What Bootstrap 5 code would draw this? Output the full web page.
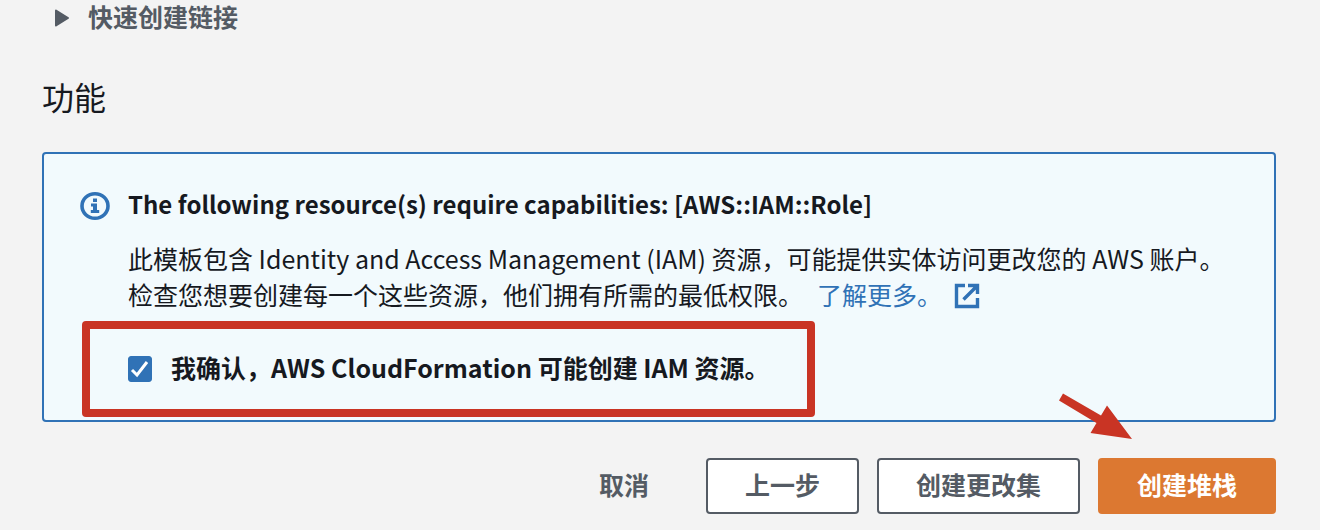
<!DOCTYPE html>
<html lang="zh-CN">
<head>
<meta charset="utf-8">
<meta name="viewport" content="width=device-width, initial-scale=1">
<title>创建堆栈</title>
<link href="https://cdn.jsdelivr.net/npm/bootstrap@5.3.0/dist/css/bootstrap.min.css" rel="stylesheet">
<style>
body { background: #f3f3f3; color: #16191f; font: 25px/36px "Noto Sans CJK SC", sans-serif; }
.page-body { padding: 0 44px 16px 42px; }
.quick-toggle { color: #545b64; font-weight: 700; font-size: 25px; line-height: 32px; gap: 18px; padding: 0 0 0 12px; border: 0; background: none; }
.quick-toggle svg { margin-top: 4px; }
.section-title { font-size: 32px; line-height: 40px; font-weight: 400; margin: 44px 0 36px; }
.info-panel { background: #f2fafd; border: 2px solid #3072b6; border-radius: 4px; padding: 32px 36px 3px; }
.info-body { gap: 18px; }
.info-title { font-size: 24px; line-height: 36px; font-weight: 700; margin: 0 0 18px; }
.info-icon { margin-top: 5px; }
.more-link { color: #3072b6; text-decoration: none; margin-left: 14px; }
.more-link svg { margin-left: 12px; vertical-align: -4px; }
.confirm-frame { border: 8px solid #c93424; border-radius: 4px; padding: 20px 37px 24px 38px; margin: 9px 0 0 2px; width: fit-content; gap: 19px; font-weight: 700; }
.confirm-frame .form-check-input { width: 24px; height: 26px; margin: 4px 0 0; border-radius: 3px; flex: none; }
.confirm-frame .form-check-input:checked { border-color: #3072b6; background-color: #3072b6; background-size: 24px 26px;
  background-image: url("data:image/svg+xml,%3csvg xmlns='http://www.w3.org/2000/svg' viewBox='0 0 24 26'%3e%3cpath fill='none' stroke='%23fff' stroke-width='3' d='M4 14l5 5L19 6'/%3e%3c/svg%3e"); }
.actions { gap: 18px; margin-top: 36px; }
.actions .btn { font-size: 25px; line-height: 36px; font-weight: 700; padding: 6px 37px 10px; border: 2px solid #545b64; border-radius: 4px; color: #545b64; background: #fff; }
.actions .btn-plain { background: none; border-color: transparent; }
.actions .btn-create { background: #dc7831; border-color: #dc7831; color: #fff; }
.pointer { left: -40px; top: -66px; pointer-events: none; }
</style>
</head>
<body>
<main class="page-body">
  <button type="button" class="quick-toggle d-flex align-items-center" aria-expanded="false">
    <svg width="16" height="18" viewBox="0 0 16 18" aria-hidden="true"><path d="M2 1.5L14 9L2 16.5Z" fill="#545b64" stroke="#545b64" stroke-width="2" stroke-linejoin="round"/></svg>
    快速创建链接
  </button>
  <h2 class="section-title">功能</h2>
  <section class="info-panel">
    <div class="info-body d-flex align-items-start">
      <svg class="info-icon flex-shrink-0" width="30" height="30" viewBox="0 0 30 30" aria-hidden="true"><ellipse cx="15" cy="15" rx="13" ry="12.3" fill="none" stroke="#3072b6" stroke-width="3.6"/><path d="M13 7.500h4v3.500h-4zM11 12.600h6v6.400h2.200V22h-8.400v-3h2.200v-3.400h-2z" fill="#3072b6"/></svg>
      <div>
        <h3 class="info-title">The following resource(s) require capabilities: [AWS::IAM::Role]</h3>
        <p class="m-0">此模板包含 Identity and Access Management (IAM) 资源，可能提供实体访问更改您的 AWS 账户。<br>检查您想要创建每一个这些资源，他们拥有所需的最低权限。<a class="more-link" href="#">了解更多。<svg width="26" height="26" viewBox="0 0 26 26" aria-hidden="true"><path d="M11 2.500H2.500v21h21V15M14 2.500h9.500V11M23 3L9.500 16.500" fill="none" stroke="#3072b6" stroke-width="3.400"/></svg></a></p>
      </div>
    </div>
    <div class="confirm-frame d-flex align-items-center">
      <input class="form-check-input" type="checkbox" id="ackIam" checked>
      <label for="ackIam">我确认，AWS CloudFormation 可能创建 IAM 资源。</label>
    </div>
  </section>
  <div class="actions d-flex justify-content-end">
    <button type="button" class="btn btn-plain">取消</button>
    <button type="button" class="btn">上一步</button>
    <button type="button" class="btn">创建更改集</button>
    <div class="position-relative">
      <button type="button" class="btn btn-create">创建堆栈</button>
      <svg class="pointer position-absolute" width="76" height="50" viewBox="0 0 76 50" aria-hidden="true"><path d="M5 1.500L43 23.500L49 13.500L74 47L32.500 41L38.500 31L1 8.500Z" fill="#c93424"/></svg>
    </div>
  </div>
</main>
<script src="https://cdn.jsdelivr.net/npm/bootstrap@5.3.0/dist/js/bootstrap.bundle.min.js"></script>
</body>
</html>
